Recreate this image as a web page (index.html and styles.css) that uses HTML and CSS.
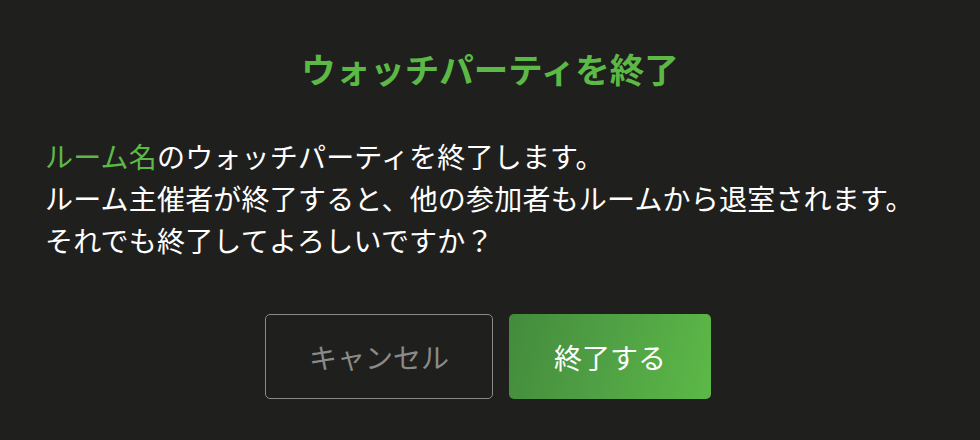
FILE: index.html
```html
<!DOCTYPE html>
<html lang="ja">
<head>
<meta charset="utf-8">
<link rel="stylesheet" href="styles.css">
</head>
<body>
<div class="dialog">
  <h1 class="title">ウォッチパーティを終了</h1>
  <p class="message"><span class="room">ルーム名</span>のウォッチパーティを終了します。<br>ルーム主催者が終了すると、他の参加者もルームから退室されます。<br>それでも終了してよろしいですか？</p>
  <div class="actions">
    <button class="btn btn-cancel">キャンセル</button>
    <button class="btn btn-end">終了する</button>
  </div>
</div>
</body>
</html>
```
FILE: styles.css
```css
html, body {
  margin: 0;
  padding: 0;
  background: #1f201e;
}
body {
  width: 980px;
  height: 440px;
  overflow: hidden;
  font-family: "Noto Sans CJK JP", "Noto Sans", sans-serif;
}
.dialog {
  padding: 46px 45px 0;
  display: flex;
  flex-direction: column;
}
.title {
  margin: 0;
  text-align: center;
  color: #5cb946;
  font-size: 34.5px;
  font-weight: 700;
  line-height: 44px;
}
.message {
  margin: 45px 0 0;
  color: #ffffff;
  font-size: 28px;
  line-height: 42px;
  letter-spacing: 0.2px;
}
.room {
  color: #5cb946;
}
.actions {
  margin-top: 53px;
  display: flex;
  justify-content: center;
  gap: 16px;
  padding-right: 4px;
}
.btn {
  height: 85px;
  border-radius: 5px;
  font-family: inherit;
  font-size: 28px;
  padding: 0;
}
.btn-cancel {
  width: 228px;
  background: transparent;
  border: 1.5px solid #8a8b89;
  color: #8a8b89;
}
.btn-end {
  width: 202px;
  border: none;
  color: #ffffff;
  background: linear-gradient(105deg, #438b3c 0%, #4f9f44 45%, #5cb946 100%);
}
```
